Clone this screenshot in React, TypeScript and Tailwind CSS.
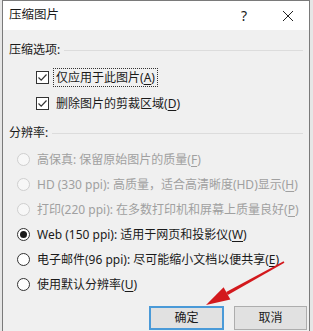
import React from 'react';

const font = { fontFamily: '"Noto Sans", "Noto Sans CJK SC", sans-serif' };

function Mn({ k }: { k: string }) {
  return <>(<span className="underline underline-offset-2">{k}</span>)</>;
}

function Check({ label, k, focus }: { label: string; k: string; focus?: boolean }) {
  return (
    <div className="flex items-center h-[26px] pl-[27px]">
      <div className="w-[13px] h-[13px] border border-[#333] bg-white flex items-center justify-center">
        <svg width="11" height="11" viewBox="0 0 11 11">
          <path d="M1.5 5.5 L4.2 8.2 L9.5 2.5" fill="none" stroke="#333" strokeWidth="1.2" />
        </svg>
      </div>
      <span className={'ml-[5px] px-[2px] leading-[17px] ' + (focus ? 'outline outline-1 outline-dotted outline-[#333]' : '')}>
        {label}<Mn k={k} />
      </span>
    </div>
  );
}

function Radio({ label, k, checked, disabled }: { label: string; k: string; checked?: boolean; disabled?: boolean }) {
  return (
    <div className="flex items-center h-[25px] pl-[8px]">
      <div
        className={
          'w-[13px] h-[13px] rounded-full border flex items-center justify-center ' +
          (disabled ? 'border-[#cfcfcf] bg-[#f7f7f7]' : 'border-[#333] bg-white')
        }
      >
        {checked && <div className="w-[7px] h-[7px] rounded-full bg-[#1a1a1a]" />}
      </div>
      <span className={'ml-[7px] ' + (disabled ? 'text-[#a0a0a0]' : 'text-[#1a1a1a]')}>
        {label}<Mn k={k} />
      </span>
    </div>
  );
}

function Group({ title }: { title: string }) {
  return (
    <div className="flex items-center h-[18px]">
      <span>{title}</span>
      <div className="flex-1 ml-[4px] mr-[6px] h-px bg-[#dcdcdc]" />
    </div>
  );
}

export default function App() {
  return (
    <div className="relative w-[313px] h-[331px] overflow-hidden bg-[#e6e6e6] text-[12px] text-[#1a1a1a]" style={font}>
      <div className="ml-[2px] mr-[3px] h-full border-x border-t border-[#7a7a7a] bg-[#f0f0f0] flex flex-col">
        <div className="h-[29px] bg-white flex items-center pl-[6px]">
          <span className="text-[12.5px]">压缩图片</span>
          <span className="ml-auto mr-[35px] text-[14px]">?</span>
          <svg width="12" height="12" viewBox="0 0 12 12" className="mr-[15px]">
            <path d="M1 1 L11 11 M11 1 L1 11" stroke="#222" strokeWidth="1" />
          </svg>
        </div>
        <div className="pl-[6px] pt-[11px]">
          <Group title="压缩选项:" />
          <div className="mt-[5px]">
            <Check label="仅应用于此图片" k="A" focus />
            <Check label="删除图片的剪裁区域" k="D" />
          </div>
          <div className="mt-[8px]">
            <Group title="分辨率:" />
          </div>
          <div className="mt-[5px]">
            <Radio label="高保真: 保留原始图片的质量" k="F" disabled />
            <Radio label="HD (330 ppi): 高质量，适合高清晰度(HD)显示" k="H" disabled />
            <Radio label="打印(220 ppi): 在多数打印机和屏幕上质量良好" k="P" disabled />
            <Radio label="Web (150 ppi): 适用于网页和投影仪" k="W" checked />
            <Radio label="电子邮件(96 ppi): 尽可能缩小文档以便共享" k="E" />
            <Radio label="使用默认分辨率" k="U" />
          </div>
        </div>
        <div className="flex justify-end gap-[10px] pr-[2px] mt-[9px]">
          <button className="w-[75px] h-[24px] border-2 border-[#4a9ad8] bg-[#e1e1e1] text-[12px]">确定</button>
          <button className="w-[73px] h-[24px] border border-[#adadad] bg-[#e1e1e1] text-[12px]">取消</button>
        </div>
      </div>
      <svg className="absolute left-0 top-0 pointer-events-none" width="313" height="331" viewBox="0 0 313 331">
        <path d="M284.4 262.7 L283.6 261.3 L226.2 291.9 L227.8 294.9 Z" fill="#d3191d" />
        <path d="M206 305 L223.6 287.3 L230.4 299.5 Z" fill="#d3191d" />
      </svg>
    </div>
  );
}
